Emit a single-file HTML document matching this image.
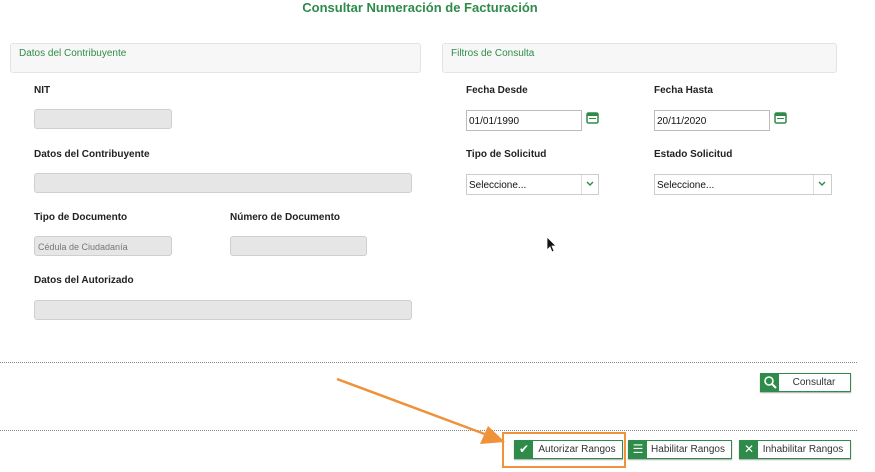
<!DOCTYPE html>
<html><head><style>
body{margin:0;width:875px;height:472px;background:#fff;font-family:"Liberation Sans",sans-serif;position:relative;overflow:hidden}
.a{position:absolute}
.t{left:0;width:840px;text-align:center;top:0;color:#2e8b4a;font-weight:bold;font-size:13px}
.p{background:#f7f7f7;border:1px solid #e3e3e3;border-radius:3px;height:28px}
.p span{position:absolute;left:8px;top:4px;font-size:10px;color:#2e8b4a}
.l{font-size:10px;font-weight:bold;color:#222}
.i{background:#e6e6e6;border:1px solid #cfcfcf;border-radius:3px;height:20px;box-sizing:border-box}
.w{background:#fff;border:1px solid #bbb;height:21px;box-sizing:border-box;font-size:10px;padding:5px 2px;color:#111}
.dl{border-top:1px dotted #888;height:0}
.b{height:19px;border:1px solid #2e8b4a;background:#fff;box-sizing:border-box;font-size:10px;color:#333;box-shadow:0 1px 1px #aaa}
.b .ic{position:absolute;left:0;top:0;width:18px;height:17px;background:#2e8b4a;color:#fff;text-align:center;font-size:12px;line-height:17px}
.b .tx{position:absolute;right:0;top:3px;text-align:center}
</style></head><body>
<div class="a t" style="top:0">Consultar Numeración de Facturación</div>
<div class="a p" style="left:10px;top:43px;width:409px"><span>Datos del Contribuyente</span></div>
<div class="a p" style="left:442px;top:43px;width:393px"><span>Filtros de Consulta</span></div>

<div class="a l" style="left:34px;top:85px">NIT</div>
<div class="a i" style="left:34px;top:109px;width:138px"></div>
<div class="a l" style="left:34px;top:149px">Datos del Contribuyente</div>
<div class="a i" style="left:34px;top:173px;width:378px"></div>
<div class="a l" style="left:34px;top:212px">Tipo de Documento</div>
<div class="a i" style="left:34px;top:236px;width:138px;font-size:9px;color:#777;padding:5px 3px">Cédula de Ciudadanía</div>
<div class="a l" style="left:230px;top:212px">Número de Documento</div>
<div class="a i" style="left:230px;top:236px;width:137px"></div>
<div class="a l" style="left:34px;top:275px">Datos del Autorizado</div>
<div class="a i" style="left:34px;top:300px;width:378px"></div>

<div class="a l" style="left:466px;top:85px">Fecha Desde</div>
<div class="a w" style="left:466px;top:110px;width:116px">01/01/1990</div>
<svg class="a" style="left:586px;top:111px" width="13" height="13"><rect x="1" y="2" width="11" height="10" rx="1.5" fill="none" stroke="#2e8b4a" stroke-width="1.5"/><rect x="1" y="2" width="11" height="3" fill="#2e8b4a"/><rect x="3" y="7" width="7" height="1" fill="#2e8b4a"/></svg>
<div class="a l" style="left:654px;top:85px">Fecha Hasta</div>
<div class="a w" style="left:654px;top:110px;width:116px">20/11/2020</div>
<svg class="a" style="left:774px;top:111px" width="13" height="13"><rect x="1" y="2" width="11" height="10" rx="1.5" fill="none" stroke="#2e8b4a" stroke-width="1.5"/><rect x="1" y="2" width="11" height="3" fill="#2e8b4a"/><rect x="3" y="7" width="7" height="1" fill="#2e8b4a"/></svg>
<div class="a l" style="left:466px;top:149px">Tipo de Solicitud</div>
<div class="a w" style="left:466px;top:174px;width:133px;border-color:#ccc">Seleccione...</div>
<div class="a" style="left:581px;top:175px;width:1px;height:19px;background:#ddd"></div>
<svg class="a" style="left:585px;top:180px" width="10" height="8"><path d="M2 2l3 3 3-3" stroke="#2e8b4a" stroke-width="1.4" fill="none"/></svg>
<div class="a l" style="left:654px;top:149px">Estado Solicitud</div>
<div class="a w" style="left:654px;top:174px;width:178px;border-color:#ccc">Seleccione...</div>
<div class="a" style="left:813px;top:175px;width:1px;height:19px;background:#ddd"></div>
<svg class="a" style="left:817px;top:180px" width="10" height="8"><path d="M2 2l3 3 3-3" stroke="#2e8b4a" stroke-width="1.4" fill="none"/></svg>

<svg class="a" style="left:546px;top:236px" width="12" height="18"><path d="M1 1v13l3-3 2 5 2-1-2-5h4z" fill="#111" stroke="#fff" stroke-width="0.8"/></svg>

<div class="a dl" style="left:0;top:362px;width:857px"></div>
<div class="a b" style="left:760px;top:373px;width:91px"><svg class="ic" width="18" height="17"><circle cx="8" cy="7" r="4" fill="none" stroke="#fff" stroke-width="1.6"/><path d="M11 10l4 4" stroke="#fff" stroke-width="2"/></svg><div class="tx" style="width:72px">Consultar</div></div>
<div class="a dl" style="left:0;top:430px;width:857px"></div>

<div class="a" style="left:502px;top:432px;width:124px;height:36px;border:2px solid #f0923a;box-sizing:border-box"></div>
<svg class="a" style="left:330px;top:370px" width="190" height="80"><path d="M7 9L160 66" stroke="#f0923a" stroke-width="2.5"/><path d="M175 72L150 74L158 56z" fill="#f0923a"/></svg>

<div class="a b" style="left:514px;top:440px;width:109px"><div class="ic">✔</div><div class="tx" style="width:90px">Autorizar Rangos</div></div>
<div class="a b" style="left:628px;top:440px;width:104px"><div class="ic">☰</div><div class="tx" style="width:86px">Habilitar Rangos</div></div>
<div class="a b" style="left:739px;top:440px;width:112px"><div class="ic">✕</div><div class="tx" style="width:94px">Inhabilitar Rangos</div></div>
</body></html>
